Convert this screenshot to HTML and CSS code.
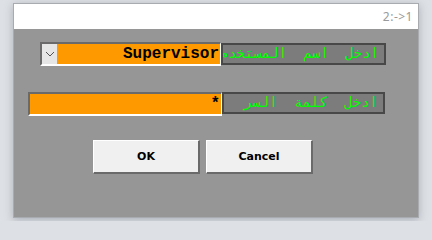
FILE: index.html
```html
<!doctype html>
<html>
<head>
    <title>Login</title>
    <link rel="stylesheet" href="styles.css">
</head>
<body>
    <div class="ventana">
        <div class="titulo">2:-&gt;1</div>
        <div class="contenido">
            <div class="fila filaUsuario">
                <div class="combo">
                    <span class="flecha">
                        <svg width="10" height="6" viewBox="0 0 10 6"><path d="M1 1 L5 5 L9 1" fill="none" stroke="#555" stroke-width="1"/></svg>
                    </span>
                    <span class="valor">Supervisor</span>
                </div>
                <div class="etiqueta etiquetaUsuario">ادخل اسم المستخدم</div>
            </div>
            <div class="fila filaClave">
                <div class="campo"><span class="valor">*</span></div>
                <div class="etiqueta etiquetaClave">ادخل كلمة السر</div>
            </div>
            <div class="botones">
                <button class="boton">OK</button>
                <button class="boton">Cancel</button>
            </div>
        </div>
    </div>
</body>
</html>
```

FILE: styles.css
```css
* {
    margin: 0;
    padding: 0;
    box-sizing: border-box;
}

body {
    background: #dde0e4;
    padding: 3px 13px;
    font: 12px "Noto Sans", sans-serif;
}

.ventana {
    width: 406px;
    height: 215px;
    border: 1px solid #a8abb0;
    box-shadow: 0 2px 8px rgba(80, 90, 110, 0.35);
    display: flex;
    flex-direction: column;
}

.titulo {
    height: 25px;
    background: #fff;
    color: #9a9a9a;
    text-align: right;
    padding: 4px 5px 0 0;
    font-size: 12px;
    letter-spacing: 0.5px;
}

.contenido {
    flex: 1;
    background: #969696;
}

.fila {
    display: flex;
    height: 24px;
}

.filaUsuario {
    margin: 13px 0 0 26px;
}

.filaClave {
    margin: 26px 0 0 14px;
}

.combo {
    width: 181px;
    display: flex;
    border-top: 2px solid #6a6a6a;
    border-left: 2px solid #6a6a6a;
    border-bottom: 2px solid #fff;
    border-right: 1px solid #fff;
    background: #ff9900;
}

.flecha {
    width: 15px;
    background: #e6e6e6;
    display: flex;
    align-items: center;
    justify-content: center;
}

.valor {
    flex: 1;
    text-align: right;
    font: bold 16px "Liberation Mono", monospace;
    color: #000;
    line-height: 20px;
    padding-right: 1px;
}

.campo {
    width: 194px;
    display: flex;
    border-top: 2px solid #6a6a6a;
    border-left: 2px solid #6a6a6a;
    border-bottom: 2px solid #fff;
    border-right: 1px solid #fff;
    background: #ff9900;
}

.etiqueta {
    height: 22px;
    margin-top: 1px;
    background: #7c7c7c;
    border: 2px solid #484848;
    color: #00ff00;
    font: 14px "DejaVu Sans Mono", monospace;
    line-height: 17px;
    direction: rtl;
    white-space: nowrap;
    overflow: hidden;
    padding-right: 5px;
    word-spacing: 8px;
}

.etiquetaUsuario {
    width: 165px;
}

.etiquetaClave {
    width: 163px;
    margin-top: 0;
    height: 22px;
}

.botones {
    display: flex;
    gap: 6px;
    margin: 24px 0 0 79px;
}

.boton {
    width: 107px;
    height: 34px;
    background: #f0f0f0;
    border: 1px solid #fff;
    border-right: 2px solid #6a6a6a;
    border-bottom: 2px solid #6a6a6a;
    font: bold 11px "DejaVu Sans", sans-serif;
    color: #000;
}
```
